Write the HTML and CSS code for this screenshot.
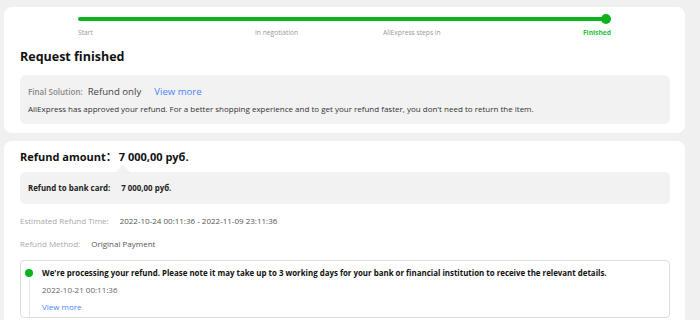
FILE: index.html
```html
<!DOCTYPE html>
<html>
<head>
<meta charset="utf-8">
<link rel="stylesheet" href="styles.css">
</head>
<body>
<div class="page">
  <section class="card status-card">
    <div class="progress">
      <div class="track"><span class="dot"></span></div>
      <div class="steps">
        <span class="step">Start</span>
        <span class="step">In negotiation</span>
        <span class="step">AliExpress steps in</span>
        <span class="step done">Finished</span>
      </div>
    </div>
    <h1 class="title">Request finished</h1>
    <div class="solution">
      <div class="sol-row">
        <span class="sol-label">Final Solution:</span>
        <span class="sol-value">Refund only</span>
        <a class="link">View more</a>
      </div>
      <p class="sol-desc">AliExpress has approved your refund. For a better shopping experience and to get your refund faster, you don't need to return the item.</p>
    </div>
  </section>

  <section class="card refund-card">
    <div class="amount">Refund amount<span class="colon">：</span><span class="amount-value">7 000,00 руб.</span></div>
    <div class="breakdown">
      <span class="bd-label">Refund to bank card:</span>
      <span class="bd-value">7 000,00 руб.</span>
    </div>
    <div class="info-row"><span class="info-label">Estimated Refund Time:</span><span class="info-value">2022-10-24 00:11:36 - 2022-11-09 23:11:36</span></div>
    <div class="info-row"><span class="info-label">Refund Method:</span><span class="info-value">Original Payment</span></div>
    <div class="timeline">
      <div class="tl-axis"><span class="tl-dot"></span><span class="tl-line"></span></div>
      <div class="tl-body">
        <div class="tl-title">We're processing your refund. Please note it may take up to 3 working days for your bank or financial institution to receive the relevant details.</div>
        <div class="tl-date">2022-10-21 00:11:36</div>
        <a class="link small">View more</a>
      </div>
    </div>
  </section>
</div>
</body>
</html>
```
FILE: styles.css
```css
* { box-sizing: border-box; }
html, body { margin: 0; padding: 0; }
body {
  background: #f0f0f0;
  font-family: "Open Sans", "Noto Sans", sans-serif;
  color: #222;
  overflow: hidden;
}
.page {
  width: 681px;
  margin-left: 4px;
  padding-top: 7px;
  display: flex;
  flex-direction: column;
  gap: 8px;
}
.card {
  background: #fff;
  border-radius: 8px;
  padding: 0 15px 0 16px;
}
.status-card { padding-top: 10px; padding-bottom: 9px; height: 126px; }

.progress { margin-left: 58px; width: 533px; }
.track {
  position: relative;
  height: 4px;
  width: 528px;
  background: #0cb31d;
  border-radius: 2px;
}
.dot {
  position: absolute;
  right: -5px;
  top: -3px;
  width: 10px;
  height: 10px;
  border-radius: 50%;
  background: #0cb31d;
}
.steps {
  display: grid;
  grid-template-columns: 177px 128px 1fr auto;
  margin-top: 7px;
  font-size: 6.7px;
  line-height: 10px;
  color: #999;
}
.step.done { color: #1cbf3a; font-weight: 700; }

.title {
  margin: 10px 0 0;
  font-size: 12.5px;
  font-weight: 700;
  line-height: 18px;
  color: #111;
}
.solution {
  margin-top: 9px;
  height: 49px;
  background: #f2f2f2;
  border-radius: 6px;
  padding: 10px 10px 0 8px;
}
.sol-row { display: flex; align-items: baseline; line-height: 14px; }
.sol-label { font-size: 8px; font-weight: 600; color: #888; margin-right: 5px; }
.sol-value { font-size: 9.6px; color: #444; margin-right: 13px; }
.link { color: #4b84ff; font-size: 9.6px; cursor: pointer; }
.sol-desc { margin: 4px 0 0; font-size: 8px; line-height: 12px; color: #333; }

.refund-card { padding-top: 7px; height: 190px; }
.amount {
  display: flex;
  align-items: baseline;
  font-size: 11px;
  font-weight: 700;
  line-height: 16px;
  color: #111;
}
.colon { font-family: "Noto Sans CJK SC", sans-serif; font-weight: 700; margin-right: 2px; }
.breakdown {
  position: relative;
  margin-top: 7px;
  height: 32px;
  background: #f2f2f2;
  border-radius: 5px;
  padding-left: 8px;
  display: flex;
  align-items: center;
  font-size: 7.9px;
  font-weight: 700;
  color: #222;
}
.breakdown::before {
  content: "";
  position: absolute;
  left: 96px;
  top: -7px;
  border-left: 7px solid transparent;
  border-right: 7px solid transparent;
  border-bottom: 7px solid #f2f2f2;
}
.bd-label { margin-right: 11px; }

.info-row { font-size: 8px; line-height: 12px; margin-top: 11px; }
.info-label { color: #a8a8a8; margin-right: 11px; }
.info-value { color: #555; }

.timeline {
  margin-top: 10px;
  height: 58px;
  border: 1px solid #ddd;
  border-radius: 4px;
  display: flex;
  padding: 6px 8px 0 4px;
}
.tl-axis {
  width: 8px;
  display: flex;
  flex-direction: column;
  align-items: center;
  padding-top: 2px;
  margin-bottom: -1px;
}
.tl-dot { width: 8px; height: 8px; border-radius: 50%; background: #0cb31d; flex: none; }
.tl-line { flex: 1; width: 1px; background: #e6e6e6; margin-top: 2px; }
.tl-body { padding-left: 9px; }
.tl-title { font-size: 7.9px; font-weight: 700; line-height: 12px; color: #111; white-space: nowrap; }
.tl-date { font-size: 8px; line-height: 12px; color: #666; margin-top: 5px; }
.link.small { display: block; font-size: 8px; line-height: 12px; margin-top: 5px; }
```
